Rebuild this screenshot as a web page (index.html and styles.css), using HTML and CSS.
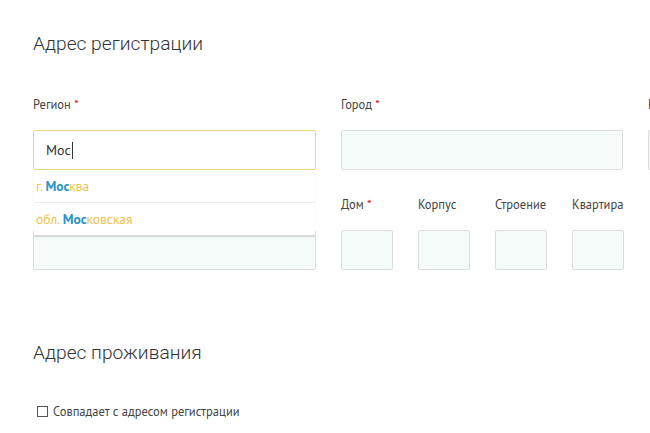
FILE: index.html
```html
<!DOCTYPE html>
<html lang="ru">
<head>
<meta charset="utf-8">
<link rel="stylesheet" href="styles.css">
</head>
<body>
<div class="page">
  <section class="block">
    <h2 class="title">Адрес регистрации</h2>
    <div class="grid">
      <div class="field">
        <div class="label">Регион <span class="req">*</span></div>
        <div class="control">
          <div class="input focus">Мос<span class="caret"></span></div>
          <ul class="suggest">
            <li>г. <b>Мос</b>ква</li>
            <li>обл. <b>Мос</b>ковская</li>
          </ul>
        </div>
      </div>
      <div class="field">
        <div class="label">Город <span class="req">*</span></div>
        <div class="input"></div>
      </div>
      <div class="field">
        <div class="label">Населенный пункт</div>
        <div class="input"></div>
      </div>
      <div class="field">
        <div class="label"></div>
        <div class="input"></div>
      </div>
      <div class="small-row">
        <div class="field">
          <div class="label">Дом <span class="req">*</span></div>
          <div class="input"></div>
        </div>
        <div class="field">
          <div class="label">Корпус</div>
          <div class="input"></div>
        </div>
        <div class="field">
          <div class="label">Строение</div>
          <div class="input"></div>
        </div>
        <div class="field">
          <div class="label">Квартира</div>
          <div class="input"></div>
        </div>
      </div>
    </div>
  </section>
  <section class="block second">
    <h2 class="title">Адрес проживания</h2>
    <label class="check"><span class="box"></span>Совпадает с адресом регистрации</label>
  </section>
</div>
</body>
</html>
```
FILE: styles.css
```css
html, body {
  margin: 0;
  padding: 0;
  background: #fff;
  overflow: hidden;
}
.page {
  padding: 32px 0 0 33px;
  font-family: "PT Sans", "Open Sans", "Noto Sans", sans-serif;
  color: #333;
  width: 900px;
}
.title {
  margin: 0;
  font-family: Roboto, sans-serif;
  font-weight: 300;
  font-size: 19.2px;
  line-height: 24px;
  color: #333;
}
.grid {
  margin-top: 40px;
  display: grid;
  grid-template-columns: 283px 282px 283px;
  column-gap: 25px;
  row-gap: 26px;
}
.field {
  display: flex;
  flex-direction: column;
  gap: 18px;
}
.label {
  height: 16px;
  font-size: 12.5px;
  line-height: 16px;
  color: #444;
  white-space: nowrap;
}
.req {
  color: #e0302a;
}
.control {
  position: relative;
}
.input {
  box-sizing: border-box;
  height: 40px;
  border: 1px solid #dcdcdc;
  border-radius: 2px;
  background: #f5fbf8;
}
.input.focus {
  background: #fff;
  border-color: #f0d775;
  padding: 0 12px;
  font-size: 14px;
  line-height: 38px;
  color: #333;
  display: flex;
  align-items: center;
}
.caret {
  display: inline-block;
  width: 1px;
  height: 17px;
  background: #333;
  margin-left: 1px;
}
.suggest {
  position: absolute;
  top: 40px;
  left: 1px;
  right: 1px;
  margin: 0;
  padding: 0;
  list-style: none;
  background: #fff;
  box-shadow: 0 1px 1px rgba(0, 0, 0, 0.12);
  z-index: 2;
}
.suggest li {
  height: 33px;
  line-height: 33px;
  padding-left: 2px;
  font-size: 13.5px;
  color: #efc24a;
  border-bottom: 1px solid #ececec;
  box-sizing: border-box;
}
.suggest li:last-child {
  border-bottom: 1px solid #d8d8d8;
}
.suggest b {
  color: #2c93c4;
  font-weight: 700;
}
.small-row {
  display: grid;
  grid-template-columns: repeat(4, 52px);
  column-gap: 25px;
}
.second {
  margin-top: 71px;
}
.check {
  display: flex;
  align-items: center;
  gap: 5px;
  margin-top: 38px;
  margin-left: 4px;
  font-size: 12.5px;
  line-height: 16px;
  color: #444;
}
.box {
  width: 9px;
  height: 9px;
  border: 1px solid #555;
}
```
